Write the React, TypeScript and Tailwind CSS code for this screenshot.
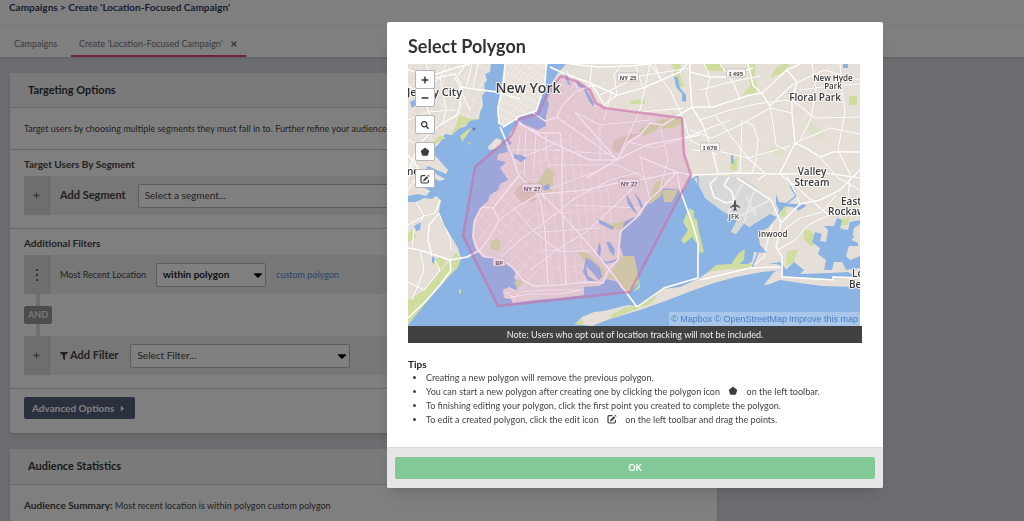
import { ReactNode } from 'react';
import { FaCaretDown, FaCaretRight, FaFilter, FaMinus, FaPlus, FaSearch, FaTimes } from 'react-icons/fa';

const WATER = '#8bb4e5';
const LAND = '#e6dfd8';
const PARK = '#cfdd9f';

const landShapes = [
  // New Jersey
  'M408 64H433L428 68L418 67L416 64H491L490 72L485 74L487 80L484 84L485 92L482 96L483 106L480 112L479 119L470 120L466 126L458 129L452 135L445 134L438 145L430 150L448 170L446 174L428 166L426 168L445 179L440 181L426 175L424 188L430 191L426 196L418 194L408 196Z',
  // Manhattan
  'M505 64H548L545 76L545 87L541 98L537 110L529 114L520 116L513 122L503 127L499 124L497 112L499 98L501 88Z',
  // Staten Island
  'M408 202L416 202L424 198L432 199L436 196L441 200L439 212L444 225L452 238L458 248L461 258L458 267L446 279L434 293L421 308L408 325Z',
  // Brooklyn and Queens
  'M566 64H860V278L848 272L830 273L800 274L787 270L780 262L756 266L752 262L754 252L767 253L760 245L758 232L768 228L777 217L770 214L749 227L744 223L736 234L731 232L737 220L721 210L704 197L694 178L690 178L686 186L684 190L660 188L654 198L646 206L640 216L632 218L624 222L622 232L620 246L624 258L634 257L636 268L638 280L630 292L620 292L620 282L606 279L600 286L584 287L584 295L560 298L535 300L513 303L511 299L504 298L503 290L509 287L516 290L520 283L514 278L516 270L508 264L500 258L482 257L475 248L472 237L473 222L479 209L488 201L490 195L498 190L500 184L508 180L504 174L500 168L506 162L497 160L498 154L508 152L506 146L512 144L508 138L512 130L518 122L528 126L538 130L546 126L546 116L549 104L547 99L552 91L551 84L558 73Z',
  // Rockaway and Long Beach
  'M575 324L582 317L594 312L604 311L628 305L638 306L652 298L663 289L680 287L698 279L708 272L716 268L730 268L748 264L758 258L766 262L780 265L782 269L774 272L764 285L770 284L780 280L800 283L822 286L860 287V276L830 279L782 276L781 270L762 272L736 277L714 283L694 290L668 300L640 310L610 319L592 326Z',
  // Governors Island
  'M488 147L496 138L501 140L502 145L495 149L489 150Z',
];

const parkShapes = [
  'M450 135L456 125L459 115L468 118L479 119L470 121L462 127Z',
  'M432 143L440 135L446 138L438 142L428 150Z',
  'M408 300L424 291L440 272L456 253L461 258L458 267L434 293L408 325Z',
  'M408 233L414 229L416 238L408 242Z',
  'M537 184L547 167L554 172L552 192L545 194L540 190Z',
  'M491 241L497 238L501 244L498 251L490 249Z',
  'M638 130L650 124L664 119L680 118L684 121L674 128L658 129L644 136Z',
  'M618 262L622 256L634 256L637 270L639 282L630 292L621 291L620 281L607 278Z',
  'M577 252L585 251L604 269L604 277L598 275Z',
  'M656 182L664 180L661 196L650 204L646 202L652 192Z',
  'M662 190L678 190L672 202L664 202Z',
  'M616 223L625 221L620 230L604 224L598 219L610 224Z',
  'M638 286L640 282L640 288L633 292Z',
  'M683 222L689 208L694 211L693 224L697 236L699 246L692 237L684 244L681 240L688 230Z',
  'M692 216L697 220L699 232L704 252L700 253L695 238Z',
  'M612 314L626 307L638 306L652 298L658 293L652 303L634 310L610 319Z',
  'M575 324L582 318L584 325Z',
  'M748 64H756L754 78L758 88L755 94L745 94L741 96L750 86Z',
  'M770 78L776 68L783 64H790L783 72L774 77Z',
  'M672 64H681L679 73L684 86L681 88L675 76Z',
  'M704 64H722L724 71L711 71L704 68Z',
  'M630 101L644 99L645 104L631 104Z',
  'M849 96H857V105H849Z',
  'M744 68H748V72H744Z',
  'M730 164L737 157L737 170L732 171Z',
  'M804 230L810 230L820 242L811 246L804 240Z',
  'M787 252L798 249L794 262L786 266Z',
  'M738 254L745 249L744 260L736 267L730 266Z',
  'M782 207L787 206L786 216L780 218Z',
  'M838 222L850 216L848 225L838 226Z',
  'M708 272L716 265L730 264L754 264L750 268L728 269Z',
  'M514 282L521 279L523 285L517 288Z',
  'M432 262L440 256L446 262L440 270Z',
  'M460 136L467 130L472 128L462 142Z',
];

const paleParkShapes = [
  'M811 122L825 133L823 140L807 131Z',
  'M771 146L785 150L782 156L770 151Z',
  'M425 286L434 279L440 285L430 294Z',
];

const tanShapes = [
  'M614 140L630 134L640 134L628 142L620 154L612 150Z',
  'M516 188L530 182L539 190L536 200L522 203L515 195Z',
];

const creekShapes = [
  'M564 73L567 73L569 82L572 86L568 84Z',
  'M576 80L580 84L585 87L589 94L594 103L593 107L589 101L584 90L578 86Z',
  'M674 76L678 78L680 88L686 95L686 102L682 101L682 94L676 87Z',
  'M731 155L733 155L734 164L731 163Z',
  'M410 102L418 98L424 92L420 102L412 108Z',
  'M414 226L421 222L420 230L416 231Z',
  'M432 256L435 258L434 264L432 262Z',
  'M598 219L614 227L613 230L600 224Z',
  'M543 186L549 184L550 189L544 191Z',
  'M598 246L600 242L601 250L600 258L606 262L617 259L616 262L604 264L597 256Z',
  'M606 242L610 242L615 250L614 256L610 252Z',
  'M586 258L592 261L600 268L602 277L599 280L592 272L586 266L588 276L596 281L588 281L583 272Z',
  'M626 194L630 200L637 213L634 212L628 204Z',
  'M634 192L641 201L645 212L641 208Z',
  'M514 154L521 155L527 158L521 162L514 158Z',
  'M584 287H620L626 292L600 295L584 296Z',
  'M776 194L779 202L792 204L800 204L798 208L784 206L780 212L776 204Z',
  'M815 232L822 234L820 241L826 242L828 230L824 226L834 226L837 218L842 220L840 229L848 230L850 222L860 220V224L854 228L852 240L858 243V246L849 246L846 256L850 260L860 256V268L846 270L842 262L834 262L832 270L824 270L826 260L818 254L820 248L812 242Z',
  'M797 208L804 203L806 206L798 211Z',
  'M794 262L804 270L800 274L786 270Z',
  'M843 64H848V68H843Z',
];

const majorRoads = [
  'M408 97L422 80L440 77L455 74L462 87L460 105L457 115L440 125L428 135L418 146L410 168',
  'M460 87L497 92L520 99',
  'M408 70L430 76L458 67L470 64',
  'M458 75L466 64M462 87L480 90',
  'M408 155L420 170L424 188',
  'M499 124L498 108L503 88L505 64M503 127L520 116L536 111L545 84L546 64',
  'M500 127L510 150L519 176L536 192L541 203L545 230L548 284',
  'M515 118L525 127L540 133L560 133L562 150L562 200L566 284',
  'M532 112L545 121L557 117L563 105L575 92L592 85',
  'M550 67L563 73L590 83L617 95L643 88L680 72L687 64',
  'M570 64L600 67L630 66L650 64',
  'M592 85L598 94L604 105L617 95',
  'M617 160L628 142L640 135L650 123L663 125L692 107L713 107L750 95L762 93L787 70L800 64',
  'M517 122L547 140L590 160L617 160',
  'M586 178L613 162L646 145L700 135',
  'M575 112L617 160M557 117L617 160',
  'M640 157L677 172L692 175L717 174L740 173L780 174L826 173L860 178',
  'M690 64L690 82L692 107L703 125L712 150L718 173',
  'M787 70L797 82L792 100L792 113L795 143L780 173',
  'M795 143L806 148L820 157L833 152L860 152',
  'M748 64L753 85L762 94L770 106',
  'M690 72L710 77L727 77L753 68',
  'M519 176L493 208L499 220L490 237L480 250L467 257L450 260L435 255L420 250L408 248',
  'M493 208L482 207L475 220L473 237L478 250L485 257L500 258L513 268L523 280L533 286L560 285L585 282L603 283L609 268L618 260L620 232L637 217L647 202L660 190L677 172',
  'M637 307L608 268L590 246L560 212L541 194L586 190L617 183L650 178L677 172',
  'M637 307L664 288L698 278L698 243L693 225L680 190L677 172',
  'M700 280L750 268L780 267M737 178L771 200L781 223L776 247L782 257L782 277L833 280L833 277L860 278',
  'M717 177L710 184L714 197L726 203L734 201L732 192L724 185L729 177',
  'M781 223L800 204L820 200L840 190L860 170',
  'M439 213L429 225L428 240L432 256M435 213L440 200M450 260L451 270L440 285L425 302L408 318',
];

const minorRoads = [
  'M515 210L535 232L560 252L590 250M499 220L520 205L546 190L600 170',
  'M500 258L520 240L545 222L575 198L610 180L640 172',
  'M530 270L560 248L586 232L610 210L635 186',
  'M550 150L610 154M548 165L617 165L650 180M572 205L640 208M540 232L600 228M542 250L590 252',
  'M575 112L600 125L650 120M590 105L640 112L684 108M604 120L612 90M617 160L640 110L650 64M600 125L600 160',
  'M650 64L670 90L684 120L690 140L718 155M660 125L668 160L660 188M640 157L650 200M628 142L655 148L692 135L730 120',
  'M690 130L712 138L740 125L770 108L792 113M700 120L730 110L756 104L790 100M692 150L722 152L748 158L790 146',
  'M715 115L734 140L748 158L766 174M745 122L753 125L758 140L756 160L752 174M770 106L774 130L776 145L786 150',
  'M792 100L815 118L860 117M800 90L830 86L860 84M812 64L816 90L811 118L800 140M840 64L842 90L845 112L838 150L850 174L848 200',
  'M700 90L730 82L760 76M704 64L710 77L706 94L710 107M720 64L734 84L740 100M770 106L792 85L824 70L860 80',
  'M795 143L830 128L860 134M780 174L800 190L828 215M740 173L742 120M766 174L758 180M860 190L838 178L820 157',
  'M784 230L800 218L822 212L836 195M778 250L795 240L808 225L836 212M750 268L764 257L768 240L772 224M800 204L794 190L786 174',
  'M408 120L428 112L456 110M408 84L424 100L436 130M430 76L426 64M440 77L446 110L442 124M455 78L470 110M412 106L440 77M446 64L440 77M466 88L472 64M473 88L478 64',
  'M408 178L416 160L428 150M408 190L416 178M408 140L425 148M430 191L414 182',
  'M408 225L424 216L435 213M416 202L424 216L414 230L412 248M420 250L424 270L412 300M432 256L440 270L424 290L408 282M439 213L450 238L451 250',
  'M590 83L592 64M617 95L614 75L622 64M643 88L635 64M660 80L655 64M600 95L640 76L690 68M566 70L580 92',
  'M505 298L530 294L560 294L582 290M520 292L545 290L582 290M505 292L515 298',
  'M520 135L516 165M526 130L524 175M536 133L534 170M546 133L546 160M512 150L560 150M515 160L560 142',
  'M521 172L495 204',
];

const pattern = (id: string, angle: number, w: number, h: number) => (
  <pattern id={id} width={w} height={h} patternUnits="userSpaceOnUse" patternTransform={`rotate(${angle})`}>
    <path d={`M0 0H${w}M0 0V${h}`} stroke="#fbf9f7" strokeWidth="1.2" fill="none" />
  </pattern>
);

type Label = { x: number; y: number; size: number; text: string; anchor?: 'start' | 'middle' };
const labels: Label[] = [
  { x: 407, y: 96, size: 11, text: 'Jersey City', anchor: 'start' },
  { x: 528, y: 93, size: 14, text: 'New York' },
  { x: 407, y: 175, size: 10, text: 'ne', anchor: 'start' },
  { x: 833, y: 81, size: 8, text: 'New Hyde' },
  { x: 833, y: 89, size: 8, text: 'Park' },
  { x: 815, y: 101, size: 10, text: 'Floral Park' },
  { x: 812, y: 175, size: 10, text: 'Valley' },
  { x: 812, y: 186, size: 10, text: 'Stream' },
  { x: 841, y: 205, size: 10, text: 'East', anchor: 'start' },
  { x: 828, y: 215, size: 10, text: 'Rockaway', anchor: 'start' },
  { x: 773, y: 237, size: 8, text: 'Inwood' },
  { x: 852, y: 277, size: 10, text: 'Long', anchor: 'start' },
  { x: 849, y: 288, size: 10, text: 'Beach', anchor: 'start' },
  { x: 734, y: 219, size: 7, text: 'JFK' },
];

const shields = [
  { x: 628, y: 77, w: 21, text: 'NY 25' },
  { x: 736, y: 73, w: 19, text: 'I 495' },
  { x: 710, y: 147, w: 19, text: 'I 678' },
  { x: 532, y: 188, w: 20, text: 'NY 27' },
  { x: 629, y: 183, w: 20, text: 'NY 27' },
  { x: 499, y: 262, w: 12, text: 'BP' },
];

const SELECTION = 'M561 76L578 82L590 90L596 103L605 108L682 118L684 154L691 175L630 292L498 306L463 236L475 167L511 136L519 119L538 114L548 91Z';

function CityMap() {
  return (
    <svg viewBox="408 64 452 262" className="block h-auto w-full" role="img" aria-label="Map of New York">
      <defs>
        {pattern('grid-nj', 22, 9, 17)}
        {pattern('grid-manhattan', 28, 3, 7)}
        {pattern('grid-brooklyn-west', 40, 13, 9)}
        {pattern('grid-brooklyn', -6, 8, 18)}
        {pattern('grid-north', 30, 11, 8)}
        {pattern('grid-queens', 64, 17, 13)}
        <clipPath id="land"><path d={landShapes.join('')} /></clipPath>
      </defs>
      <rect x="408" y="64" width="452" height="262" fill={WATER} />
      <path d={landShapes.join('')} fill={LAND} />
      <path d="M694 178L710 176L745 177L771 200L777 210L770 214L749 227L744 223L736 234L731 232L737 220L721 210L704 197Z" fill="#d9d8d8" />
      <path d="M740 216L770 200M744 223L754 190M756 216L746 196M728 212L742 184" stroke="#e8e7e6" strokeWidth="2" />
      <g clipPath="url(#land)" opacity="0.8">
        <path d="M408 64H496V200H408Z" fill="url(#grid-nj)" opacity="0.75" />
        <path d="M495 64H548V128H495Z" fill="url(#grid-manhattan)" />
        <path d="M470 178L530 195L545 284V305H470Z" fill="url(#grid-brooklyn-west)" />
        <path d="M530 135H570L604 178L622 230L580 250L588 284H545L530 195Z" fill="url(#grid-brooklyn)" />
        <path d="M550 64L590 84L617 160L570 150L545 130Z" fill="url(#grid-north)" opacity="0.7" />
        <path d="M604 105L690 110L700 175L640 220L604 178L617 160Z" fill="url(#grid-queens)" opacity="0.6" />
        <path d="M590 64H860V174H718L690 110L604 105Z" fill="url(#grid-queens)" opacity="0.35" />
      </g>
      <path d={tanShapes.join('')} fill="#dccfb8" />
      <path d={paleParkShapes.join('')} fill="#dde0c8" />
      <path d={parkShapes.join('')} fill={PARK} />
      <g clipPath="url(#land)" fill="none" strokeLinejoin="round">
        <path d={minorRoads.join('')} stroke="#d8d0c8" strokeWidth="1.7" opacity="0.6" />
        <path d={minorRoads.join('')} stroke="#fff" strokeWidth="1.1" />
      </g>
      <path d={creekShapes.join('')} fill={WATER} />
      <path d="M694 178L698 176L698 186L704 197M777 215L786 204L796 196L790 186M752 268L758 252M838 250L826 256M842 228L832 244L842 250L854 236" fill="none" stroke={WATER} strokeWidth="1.4" />
      <g fill="none" strokeLinejoin="round">
        <path d={majorRoads.join('')} stroke="#d9d0c8" strokeWidth="2.1" opacity="0.5" />
        <path d={majorRoads.join('')} stroke="#fff" strokeWidth="1.5" />
      </g>
      <circle cx="474" cy="129" r="1.6" fill="#5d7f9c" />
      <path d="M467 142L471 143L470 145ZM459 290L461 289L461 294L459 293Z" fill={PARK} />
      <path d="M735 200C736 200 736 202 736 204L740 207V208L736 206.500V209L737.500 210.500H732.500L734 209V206.500L730 208V207L734 204C734 202 734 200 735 200Z" fill="#555" />
      {shields.map((s) => (
        <g key={`${s.text}-${s.x}`}>
          <rect x={s.x - s.w / 2} y={s.y - 4} width={s.w} height="8" rx="1" fill="#f8f6f4" stroke="#b8b2ad" strokeWidth="0.7" />
          <text x={s.x} y={s.y + 2.5} textAnchor="middle" className="font-['Noto_Sans',sans-serif] text-[6px] font-bold" fill="#555">{s.text}</text>
        </g>
      ))}
      <path d={SELECTION} fill="#d47bb7" fillOpacity="0.24" stroke="#c96fa9" strokeOpacity="0.62" strokeWidth="2.6" strokeLinejoin="round" />
      {labels.map((l) => (
        <text key={`${l.text}-${l.y}`} x={l.x} y={l.y} textAnchor={l.anchor ?? 'middle'} fontSize={l.size} fill="#3a3a3a" stroke="#fff" strokeOpacity="0.85" strokeWidth="2" strokeLinejoin="round" paintOrder="stroke" className="font-['Open_Sans',sans-serif] font-semibold">{l.text}</text>
      ))}
    </svg>
  );
}

function Pentagon() {
  return (
    <svg viewBox="0 0 10 10" className="size-[10px]" aria-hidden="true">
      <path d="M5 1.200L8.600 3.800L7.500 8.200H2.500L1.400 3.800Z" fill="#3c3c3c" stroke="#3c3c3c" strokeWidth="1" strokeLinejoin="round" />
    </svg>
  );
}

function EditIcon() {
  return (
    <svg viewBox="0 0 10 10" className="size-[10px]" fill="none" stroke="#3c3c3c" aria-hidden="true">
      <path d="M5.400 1.600H2.200Q1 1.600 1 2.800V7.800Q1 9 2.200 9H7.200Q8.400 9 8.400 7.800V6" strokeWidth="1.200" />
      <path d="M4.400 6L7.600 2.800" strokeWidth="1.900" />
      <path d="M8.200 2.200L8.900 1.500" strokeWidth="1.900" />
      <path d="M3 7.400L3.500 5.300L5.100 6.900Z" fill="#3c3c3c" stroke="none" />
    </svg>
  );
}

function MapButton({ label, children }: { label: string; children: ReactNode }) {
  return (
    <button aria-label={label} className="flex h-[19px] w-5 items-center justify-center rounded-xs border border-[#b5b5b5] bg-white text-[8px] text-[#333]">
      {children}
    </button>
  );
}

function Handle({ children }: { children: ReactNode }) {
  return <div className="flex w-[26px] shrink-0 items-center justify-center border-r border-[#cfcfcf] bg-[#dcdcdc] text-[7px] text-[#777]">{children}</div>;
}

function Dropdown({ label, value, className }: { label: string; value: string; className: string }) {
  return (
    <div className={`relative ${className}`}>
      <select aria-label={label} className="h-6 w-full appearance-none rounded-xs border border-[#bbb] bg-white pr-6 pl-[6px]">
        <option>{value}</option>
      </select>
      <FaCaretDown className="pointer-events-none absolute top-[5px] right-[1px] size-[14px] text-black" />
    </div>
  );
}

const sectionTitle = 'text-[10px] leading-4 font-bold';

export default function App() {
  return (
    <div className="h-screen overflow-hidden bg-[#d9dbe0] font-[Lato,sans-serif] text-[9px] text-[#444]">
      <header className="bg-white shadow-sm">
        <div className="flex h-[26px] items-start border-b border-[#f0f0f0] pl-[9px] text-[10px] leading-[14px] font-bold text-[#313d5e]">Campaigns &gt; Create 'Location-Focused Campaign'</div>
        <nav className="flex h-[31px] text-[9px] text-[#777]">
          <a href="#campaigns" className="flex w-[71px] items-center pt-1 pl-[14px]">Campaigns</a>
          <div className="flex items-center gap-[7px] border-b-2 border-[#d8456f] px-2 pt-[6px]">
            <a href="#create">Create 'Location-Focused Campaign'</a>
            <button aria-label="Close tab"><FaTimes className="size-[8px]" /></button>
          </div>
        </nav>
      </header>

      <main className="flex w-[70%] flex-col gap-4 pt-4 pl-[10px]">
        <section className="rounded-xs bg-white shadow-md">
          <h2 className="flex h-[35px] items-center rounded-t-xs border-b border-[#d5d5d5] bg-[#f5f5f5] pl-[18px] text-[11px] font-bold text-[#333]">Targeting Options</h2>
          <p className="flex h-[42px] items-center overflow-hidden border-b border-[#ccc] pl-[14px] whitespace-nowrap">Target users by choosing multiple segments they must fall in to. Further refine your audience with additional filters.</p>
          <div className="border-b border-[#ccc] px-[14px] pt-[6px] pb-[13px]">
            <h3 className={sectionTitle}>Target Users By Segment</h3>
            <div className="mt-1 flex h-[39px] bg-[#eee]">
              <Handle><FaPlus /></Handle>
              <div className="flex flex-1 items-center gap-3 pr-4 pl-[10px]">
                <span className="text-[11px] font-bold">Add Segment</span>
                <Dropdown label="Segment" value="Select a segment..." className="flex-1 text-[10px]" />
              </div>
            </div>
          </div>
          <div className="border-b border-[#ccc] px-[14px] pt-[6px] pb-[13px]">
            <h3 className={sectionTitle}>Additional Filters</h3>
            <div className="mt-1 flex h-[39px] bg-[#eee]">
              <Handle>
                <span className="flex flex-col gap-[3px]" aria-hidden="true">
                  <i className="size-[2px] bg-[#666]" />
                  <i className="size-[2px] bg-[#666]" />
                  <i className="size-[2px] bg-[#666]" />
                </span>
              </Handle>
              <div className="flex items-center gap-[10px] pl-[10px]">
                <span>Most Recent Location</span>
                <Dropdown label="Location condition" value="within polygon" className="w-[110px] text-[10px] font-bold text-[#222]" />
                <a href="#polygon" className="text-[#4a90d9]">custom polygon</a>
              </div>
            </div>
            <div className="flex w-7 flex-col items-center">
              <div className="h-3 w-1 bg-[#dcdcdc]" />
              <div className="rounded-xs bg-[#999] px-1 text-[9px] leading-[18px] font-bold text-[#eee]">AND</div>
              <div className="h-3 w-1 bg-[#dcdcdc]" />
            </div>
            <div className="flex h-[39px] bg-[#eee]">
              <Handle><FaPlus /></Handle>
              <div className="flex items-center gap-3 pl-[10px]">
                <span className="flex items-center gap-[2px] text-[11px] font-bold"><FaFilter className="size-[8px]" />Add Filter</span>
                <Dropdown label="Filter" value="Select Filter..." className="w-[220px] text-[10px]" />
              </div>
            </div>
          </div>
          <div className="px-[14px] pt-2 pb-[14px]">
            <button className="flex h-[22px] items-center gap-1 rounded-xs bg-[#55617c] px-2 text-[10px] font-bold text-white">Advanced Options <FaCaretRight className="size-[9px]" /></button>
          </div>
        </section>

        <section className="rounded-xs bg-white shadow-md">
          <h2 className="flex h-9 items-center border-b border-[#d5d5d5] bg-[#f5f5f5] pl-[18px] text-[11px] font-bold text-[#333]">Audience Statistics</h2>
          <p className="px-[14px] pt-3 pb-8 leading-4"><b className="text-[10px]">Audience Summary:</b> Most recent location is within polygon custom polygon</p>
        </section>
      </main>

      <div className="fixed inset-0 flex items-start justify-center bg-black/50 pt-[22px] pl-[246px]">
        <div role="dialog" aria-modal="true" aria-labelledby="dialog-title" className="w-[496px] overflow-hidden rounded-xs bg-white text-[#444] shadow-lg">
          <div className="px-[21px] pt-3 pb-5">
            <h1 id="dialog-title" className="mb-[6px] text-[18px] leading-6 font-bold text-[#333]">Select Polygon</h1>
            <div className="relative mr-[2px]">
              <CityMap />
              <div className="absolute top-[6px] left-[7px] flex flex-col gap-2">
                <div className="flex flex-col">
                  <MapButton label="Zoom in"><FaPlus /></MapButton>
                  <div className="-mt-px"><MapButton label="Zoom out"><FaMinus /></MapButton></div>
                </div>
                <MapButton label="Search"><FaSearch /></MapButton>
                <MapButton label="Draw polygon"><Pentagon /></MapButton>
                <MapButton label="Edit polygon"><EditIcon /></MapButton>
              </div>
              <div className="absolute right-0 bottom-0 flex gap-[2px] bg-white/25 px-[2px] font-['Liberation_Sans',sans-serif] text-[9px] leading-[14px] text-[#4a7cc0]">
                <a href="#mapbox">© Mapbox</a> <a href="#osm">© OpenStreetMap</a> <a href="#improve">Improve this map</a>
              </div>
            </div>
            <p className="bg-[#414141] text-center text-[9px] leading-[17px] text-[#eee]">Note: Users who opt out of location tracking will not be included.</p>
            <h2 className="mt-[14px] text-[10px] leading-[14px] font-bold text-[#222]">Tips</h2>
            <ul className="list-disc pl-[18px] text-[9px] leading-[14px]">
              <li>Creating a new polygon will remove the previous polygon.</li>
              <li>You can start a new polygon after creating one by clicking the polygon icon <span className="mx-[6px] inline-block align-[-1px]"><Pentagon /></span> on the left toolbar.</li>
              <li>To finishing editing your polygon, click the first point you created to complete the polygon.</li>
              <li>To edit a created polygon, click the edit icon <span className="mx-[6px] inline-block align-[-1px]"><EditIcon /></span> on the left toolbar and drag the points.</li>
            </ul>
          </div>
          <div className="border-t border-[#ddd] bg-[#e6e6e6] px-2 pt-[9px] pb-[9px]">
            <button className="block h-[22px] w-full rounded-xs bg-[#82c997] text-[9px] font-bold text-white">OK</button>
          </div>
        </div>
      </div>
    </div>
  );
}
